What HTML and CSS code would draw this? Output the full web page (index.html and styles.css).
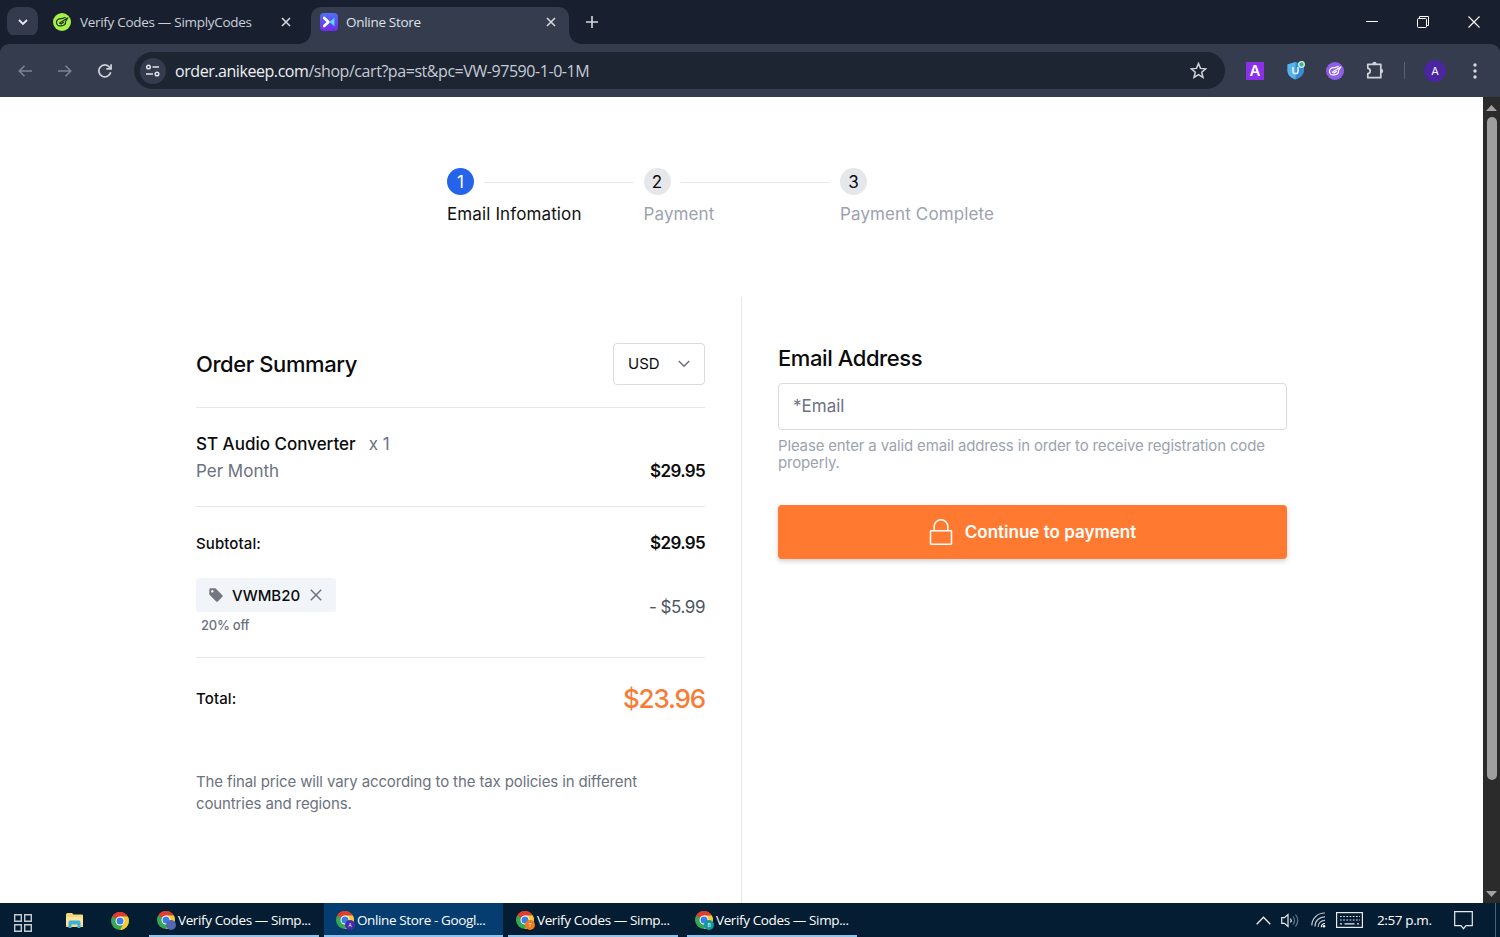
FILE: index.html
```
<!DOCTYPE html>
<html lang="en">
<head>
  <meta charset="UTF-8">
  <title>Online Store</title>
  <link rel="stylesheet" href="styles.css">
</head>
<body>

<!-- Shared icons -->
<svg class="defs" width="0" height="0">
  <symbol id="chrome" viewBox="0 0 18 18">
    <circle cx="9" cy="9" r="9" fill="#34a853"/>
    <path d="M9 9 L1.2 4.5 A9 9 0 0 1 16.8 4.5 L9 4.6z" fill="#e33b2e"/>
    <path d="M9 4.6 H16.8 A9 9 0 0 1 9 18 L12.9 11.2z" fill="#fcc934"/>
    <circle cx="9" cy="9" r="4.5" fill="#fff"/>
    <circle cx="9" cy="9" r="3.5" fill="#3c7de8"/>
  </symbol>
  <symbol id="close" viewBox="0 0 10 10">
    <path d="M1 1l8 8M9 1l-8 8" fill="none" stroke="currentColor" stroke-width="1.6"/>
  </symbol>
  <symbol id="tagmark" viewBox="0 0 18 18">
    <path d="M8.800 5.600C6 5.500 3.600 6.400 3.500 9.300C3.400 12.200 5.600 13.400 7.800 12.800C10.800 13 13 11.400 12.500 8.500L14.800 5L7.300 9.500L6.500 10.200L8.300 11L10.500 9.300M8.800 5.600L12.300 4.500" fill="none" stroke="currentColor" stroke-width="1.200" stroke-linejoin="round" stroke-linecap="round"/>
  </symbol>
</svg>

<div class="window">

  <!-- Tab strip -->
  <div class="tabs">
    <button class="tab-search">
      <svg width="10" height="7" viewBox="0 0 10 7"><path d="M1 1l4 4 4-4" fill="none" stroke="#e6e9ef" stroke-width="1.9"/></svg>
    </button>
    <div class="tab">
      <svg class="favicon lime" width="18" height="18"><use href="#tagmark"/></svg>
      <span class="tab-title">Verify Codes — SimplyCodes</span>
      <svg class="tab-close" width="10" height="10"><use href="#close"/></svg>
    </div>
    <div class="tab active">
      <svg class="favicon" width="18" height="18" viewBox="0 0 18 18">
        <defs><linearGradient id="store" x1="0" y1="0" x2="0" y2="1"><stop offset="0" stop-color="#4f70f5"/><stop offset="1" stop-color="#7429ea"/></linearGradient></defs>
        <rect width="18" height="18" rx="4" fill="url(#store)"/>
        <path d="M4.200 5l4.300 4-4.300 4" fill="none" stroke="#fff" stroke-width="2.600" stroke-linejoin="round" stroke-linecap="round"/>
        <path d="M9.500 9l5-4.200v8.400z" fill="#5bd9f5"/>
      </svg>
      <span class="tab-title">Online Store</span>
      <svg class="tab-close" width="10" height="10"><use href="#close"/></svg>
    </div>
    <svg class="new-tab" width="12" height="12" viewBox="0 0 12 12"><path d="M6 0v12M0 6h12" stroke="#d5d9e0" stroke-width="1.600"/></svg>
    <div class="controls">
      <svg width="12" height="12" viewBox="0 0 12 12"><path d="M0 5.500h12" stroke="#fff"/></svg>
      <svg width="12" height="12" viewBox="0 0 12 12" fill="none" stroke="#fff"><rect x=".5" y="2.500" width="9" height="9" rx="1"/><path d="M2.500 2.500v-2h9v9h-2"/></svg>
      <svg width="12" height="12" viewBox="0 0 12 12"><path d="M.5.5l11 11M11.500.5l-11 11" stroke="#fff" stroke-width="1.100"/></svg>
    </div>
  </div>

  <!-- Toolbar -->
  <div class="toolbar">
    <div class="nav">
      <svg width="14" height="12" viewBox="0 0 14 12" fill="none" stroke="#7c8493" stroke-width="1.600"><path d="M14 6H1.500M6.500.8L1.300 6l5.200 5.200"/></svg>
      <svg width="14" height="12" viewBox="0 0 14 12" fill="none" stroke="#7c8493" stroke-width="1.600"><path d="M0 6h12.500M7.500.8L12.700 6l-5.200 5.200"/></svg>
      <svg width="14" height="14" viewBox="0 0 14 14" fill="none" stroke="#cdd2da" stroke-width="1.700"><path d="M12.700 8.300A6 6 0 1 1 11.500 3.100L13 4.700M13.100.3v4.600H8.300"/></svg>
    </div>
    <div class="address">
      <span class="site-info">
        <svg width="14" height="13" viewBox="0 0 14 13" fill="none" stroke="#e2e5ea" stroke-width="1.500"><circle cx="2.500" cy="3" r="1.800"/><path d="M6.500 3H13M0 10h7"/><circle cx="11" cy="10" r="1.800"/></svg>
      </span>
      <span class="url"><b>order.anikeep.com</b>/shop/cart?pa=st&amp;pc=VW-97590-1-0-1M</span>
      <svg class="star" width="17" height="17" viewBox="0 0 17 17"><path d="M8.500 1.500l2 4.900 5.200.4-4 3.400 1.300 5.200-4.500-2.800L4 15.400l1.300-5.200-4-3.400 5.200-.4z" fill="none" stroke="#cfd3da" stroke-width="1.500"/></svg>
    </div>
    <div class="extensions">
      <span class="ext-a">A</span>
      <svg width="18" height="19" viewBox="0 0 18 19">
        <path d="M8.500 1L17 3.500v6c0 4.200-3.500 7.500-8.500 9C3.500 17 .5 13.700.5 9.500v-6z" fill="#378bd5"/>
        <path d="M8.500 1v17.500C3.500 17 .5 13.700.5 9.500v-6z" fill="#58b4e8"/>
        <path d="M6 6v4.200c0 3.300 5 3.300 5 0V6" fill="none" stroke="#d7f0ff" stroke-width="1.700"/>
        <circle cx="14.500" cy="3.500" r="2.800" fill="#35b788" stroke="#d9f2ee" stroke-width="1.300"/>
      </svg>
      <svg class="violet" width="18" height="18"><use href="#tagmark"/></svg>
      <svg width="19" height="19" viewBox="0 0 19 19"><path d="M1.800 3.300H14.800V16.700H1.800V12.700C5 12.400 5 7.600 1.800 7.300z" fill="none" stroke="#cfd3da" stroke-width="1.700" stroke-linejoin="round"/><path d="M6.300 3a2.200 2.200 0 0 1 4.400 0zM15 7.800a2.200 2.200 0 0 1 0 4.400z" fill="#cfd3da"/></svg>
      <i class="bar"></i>
      <span class="profile">A</span>
      <svg class="menu" width="4" height="16" viewBox="0 0 4 16" fill="#d5d9e0"><circle cx="2" cy="2" r="1.700"/><circle cx="2" cy="8" r="1.700"/><circle cx="2" cy="14" r="1.700"/></svg>
    </div>
  </div>

  <!-- Page -->
  <div class="viewport">
    <div class="page">
      <ol class="steps">
        <li class="step current">
          <div class="marker"><span class="number">1</span><hr></div>
          <div class="label">Email Infomation</div>
        </li>
        <li class="step">
          <div class="marker"><span class="number">2</span><hr></div>
          <div class="label">Payment</div>
        </li>
        <li class="step">
          <div class="marker"><span class="number">3</span></div>
          <div class="label">Payment Complete</div>
        </li>
      </ol>

      <div class="checkout">
        <section class="summary">
          <header class="summary-head">
            <h2>Order Summary</h2>
            <div class="currency">
              <span>USD</span>
              <svg width="12" height="8" viewBox="0 0 12 8"><path d="M.8 1L6 6.200 11.200 1" fill="none" stroke="#6b7280" stroke-width="1.600"/></svg>
            </div>
          </header>

          <div class="item">
            <div>
              <div class="item-name"><strong>ST Audio Converter</strong><span>x 1</span></div>
              <div class="period">Per Month</div>
            </div>
            <div class="price">$29.95</div>
          </div>

          <div class="subtotal">
            <div class="row"><span class="caption">Subtotal:</span><span class="price">$29.95</span></div>
            <div class="row discount">
              <div>
                <div class="coupon">
                  <svg width="14" height="14" viewBox="0 0 14 14"><path fill-rule="evenodd" d="M.3 1.500Q.3.300 1.500.3H6.500L13.400 7.200Q14.200 8 13.400 8.800L8.800 13.400Q8 14.200 7.200 13.400L.3 6.500zM3.300 2a1.300 1.300 0 1 0 .01 0z" fill="#737680"/></svg>
                  <span>VWMB20</span>
                  <svg class="remove" width="12" height="12" viewBox="0 0 12 12"><path d="M.8.8l10.400 10.400M11.200.8L.8 11.200" stroke="#6b7280" stroke-width="1.500"/></svg>
                </div>
                <div class="percent">20% off</div>
              </div>
              <span class="minus">- $5.99</span>
            </div>
          </div>

          <div class="row total"><span class="caption">Total:</span><span class="grand">$23.96</span></div>

          <p class="tax-note">The final price will vary according to the tax policies in different<br>countries and regions.</p>
        </section>

        <section class="email">
          <h2>Email Address</h2>
          <input type="email" placeholder="*Email">
          <p class="help">Please enter a valid email address in order to receive registration code<br>properly.</p>
          <button class="continue">
            <svg width="24" height="28" viewBox="0 0 24 28" fill="none" stroke="#fff" stroke-width="1.500"><rect x="1.500" y="12.700" width="21" height="13.500" rx=".6"/><path d="M5.200 12.700V8.500a6.800 6.800 0 0 1 13.600 0v4.200"/></svg>
            <span>Continue to payment</span>
          </button>
        </section>
      </div>
    </div>

    <div class="scrollbar">
      <svg width="11" height="6" viewBox="0 0 11 6"><path d="M0 6l5.500-6L11 6z" fill="#a2a2a2"/></svg>
      <div class="thumb"></div>
      <svg width="11" height="6" viewBox="0 0 11 6"><path d="M0 0l5.500 6L11 0z" fill="#a2a2a2"/></svg>
    </div>
  </div>

  <!-- Taskbar -->
  <div class="taskbar">
    <svg class="start" width="18" height="18" viewBox="0 0 18 18" fill="none" stroke="#c3cbd0" stroke-width="1.400"><path d="M.7.7h6.600v6.600H.7zM10.700.7h6.600v6.600h-6.600zM.7 10.700h6.600v6.600H.7zM10.700 10.700h6.600v6.600h-6.600z"/></svg>
    <svg class="explorer" width="17" height="15" viewBox="0 0 17 15"><path d="M0 1.500Q0 0 1.500 0H6l1.500 1.500H16Q17 1.500 17 2.500V14H0z" fill="#f6d775"/><path d="M0 4h17v8H0z" fill="#fbe69b"/><path d="M2.500 15V9q0-1.500 1.500-1.500h9q1.500 0 1.500 1.500v6h-3v-3.500h-6V15z" fill="#3db0df"/></svg>
    <svg class="launcher" width="18" height="18"><use href="#chrome"/></svg>
    <div class="task">
      <span class="app"><svg width="18" height="18"><use href="#chrome"/></svg><i class="badge b1"></i></span>
      <span class="task-title">Verify Codes — Simp...</span>
    </div>
    <div class="task focused">
      <span class="app"><svg width="18" height="18"><use href="#chrome"/></svg><i class="badge b2">A</i></span>
      <span class="task-title">Online Store - Googl...</span>
    </div>
    <div class="task">
      <span class="app"><svg width="18" height="18"><use href="#chrome"/></svg><i class="badge b3">T</i></span>
      <span class="task-title">Verify Codes — Simp...</span>
    </div>
    <div class="task">
      <span class="app"><svg width="18" height="18"><use href="#chrome"/></svg><i class="badge b4">B</i></span>
      <span class="task-title">Verify Codes — Simp...</span>
    </div>
    <div class="tray">
      <svg width="15" height="9" viewBox="0 0 15 9"><path d="M.7 8.300L7.500 1.200l6.800 7.100" fill="none" stroke="#e5ebef" stroke-width="1.300"/></svg>
      <svg class="sound" width="19" height="17" viewBox="0 0 19 17" fill="none" stroke="#e5ebef" stroke-width="1.200"><path d="M.7 5.700h2.800L7 2.500v12l-3.500-3.200H.7zM9.500 6.500q1.500 2 0 4"/><path d="M12 4.500q3 4 0 8M14.500 2.500q4.500 6 0 12" stroke="#66798a"/></svg>
      <svg class="wifi" width="15" height="16" viewBox="0 0 15 16" fill="none" stroke="#b9c4cc" stroke-width="1.200"><path d="M.8 13.500A12.700 12.700 0 0 1 14 1M4 14.500A9.500 9.500 0 0 1 14 4.800M7.200 15A6.500 6.500 0 0 1 14 8.300"/><path d="M10.300 15.200A3.800 3.800 0 0 1 14 11.500" stroke="#fff"/><circle cx="13" cy="14.300" r="1.300" fill="#fff" stroke="none"/></svg>
      <svg class="keyboard" width="27" height="16" viewBox="0 0 27 16" fill="none" stroke="#e5ebef" stroke-width="1.200"><rect x=".6" y=".6" width="25.800" height="14.800"/><path d="M4 4.500h20M4 8h20" stroke-dasharray="1.700 1.500"/><path d="M4 11.800h2M8.500 11.800h10M21 11.800h2"/></svg>
      <span class="clock">2:57 p.m.</span>
      <svg class="notify" width="19" height="19" viewBox="0 0 19 19"><path d="M.7.7h17.600v14H12l-2.500 3-2.500-3H.7z" fill="none" stroke="#e5ebef" stroke-width="1.200"/></svg>
      <i class="peek"></i>
    </div>
  </div>

</div>
</body>
</html>
```

FILE: styles.css
```
* {
  box-sizing: border-box;
}
body {
  margin: 0;
  font-family: Inter, sans-serif;
  color: #0b0b0d;
  overflow: hidden;
}
svg {
  display: block;
  flex: none;
}
.defs {
  position: absolute;
}
h2, p, ol {
  margin: 0;
  padding: 0;
}
.window {
  width: 1500px;
  height: 937px;
  display: flex;
  flex-direction: column;
  background: #fff;
}

/* Tab strip */
.tabs {
  height: 44px;
  flex: none;
  display: flex;
  background: #182030;
  font-family: "Open Sans", sans-serif;
  font-size: 13.5px;
  letter-spacing: -0.3px;
  color: #cbd0d9;
}
.tab-search {
  width: 31px;
  height: 30px;
  margin: 7px 4px 0 7px;
  padding: 0;
  border: 0;
  border-radius: 10px;
  background: #333b4c;
  display: grid;
  place-items: center;
}
.tab {
  width: 269px;
  display: flex;
  align-items: center;
  padding: 0 20px 0 11px;
}
.favicon {
  margin-right: 9px;
}
.lime {
  border-radius: 50%;
  background: #a6f04c;
  color: #1e3017;
}
.tab-title {
  flex: 1;
  white-space: nowrap;
}
.tab-close {
  color: #d5d9e0;
}
.tab.active {
  width: 258px;
  height: 37px;
  margin-top: 7px;
  padding: 0 13px 7px 9px;
  background: #343c4d;
  border-radius: 10px 10px 0 0;
  position: relative;
  color: #dfe3ea;
}
.tab.active .favicon {
  margin-right: 8px;
}
.tab.active::before,
.tab.active::after {
  content: "";
  position: absolute;
  bottom: 0;
  width: 12px;
  height: 12px;
}
.tab.active::before {
  left: -12px;
  background: radial-gradient(circle at 0 0, transparent 11.5px, #343c4d 12px);
}
.tab.active::after {
  right: -12px;
  background: radial-gradient(circle at 100% 0, transparent 11.5px, #343c4d 12px);
}
.new-tab {
  margin: 16px 0 0 17px;
}
.controls {
  margin-left: auto;
  display: flex;
  gap: 39px;
  padding: 16px 20px 0 0;
}

/* Toolbar */
.toolbar {
  height: 53px;
  flex: none;
  display: flex;
  align-items: center;
  background: #343c4d;
  border-radius: 9px 9px 0 0;
  box-shadow: 0 -9px 0 #182030;
  /* keeps the strip colour behind the rounded corners */
  outline: 9px solid transparent;
}
.nav {
  width: 134px;
  display: flex;
  align-items: center;
  gap: 26px;
  padding-left: 18px;
}
.address {
  width: 1091px;
  height: 37px;
  border-radius: 19px;
  background: #1d2533;
  display: flex;
  align-items: center;
  padding: 0 18px 0 6px;
}
.site-info {
  width: 26px;
  height: 26px;
  border-radius: 50%;
  background: #343c4d;
  display: grid;
  place-items: center;
}
.url {
  margin-left: 9px;
  flex: 1;
  font-family: "Open Sans", sans-serif;
  font-size: 16px;
  letter-spacing: -0.44px;
  color: #c6cbd3;
  white-space: nowrap;
}
.url b {
  font-weight: 400;
  color: #eef0f4;
}
.extensions {
  flex: 1;
  display: flex;
  align-items: center;
  padding-left: 21px;
}
.ext-a {
  width: 18px;
  height: 18px;
  margin-right: 23px;
  background: #8b2fe8;
  color: #fff;
  font-size: 15px;
  font-weight: 600;
  line-height: 18px;
  text-align: center;
}
.violet {
  margin: 0 22px 0 21px;
  border-radius: 50%;
  background: #8f5fe8;
  color: #fff;
}
.bar {
  width: 1px;
  height: 17px;
  margin: 0 19px;
  background: #596274;
}
.profile {
  width: 22px;
  height: 22px;
  border-radius: 50%;
  background: #4a25a0;
  color: #fff;
  font-size: 11px;
  line-height: 22px;
  text-align: center;
}
.menu {
  margin-left: 27px;
}

/* Page */
.viewport {
  height: 806px;
  flex: none;
  display: flex;
  overflow: hidden;
}
.page {
  width: 1483px;
  overflow: hidden;
}
.steps {
  display: flex;
  height: 200px;
  padding: 71px 0 0 447px;
  list-style: none;
}
.step {
  width: 196.5px;
}
.marker {
  display: flex;
  align-items: center;
}
.marker hr {
  flex: 1;
  margin: 1px 10px 0;
  border: 0;
  height: 1px;
  background: #e5e7eb;
}
.number {
  width: 27px;
  height: 27px;
  border-radius: 50%;
  background: #e5e7eb;
  font-size: 17px;
  line-height: 28px;
  text-align: center;
}
.current .number {
  background: #2563eb;
  color: #fff;
}
.label {
  margin-top: 7px;
  font-size: 17px;
  letter-spacing: 0.12px;
  line-height: 24px;
  color: #9ca3af;
  white-space: nowrap;
}
.current .label {
  color: #111;
}
.checkout {
  display: flex;
  height: 660px;
  padding-left: 196px;
}
h2 {
  font-size: 22px;
  font-weight: 500;
  letter-spacing: -0.42px;
  line-height: 30px;
}

/* Order summary */
.summary {
  width: 546px;
  padding: 46px 36px 0 0;
  border-right: 1px solid #e5e7eb;
}
.summary-head {
  display: flex;
  justify-content: space-between;
  align-items: center;
  height: 65px;
  padding-bottom: 23px;
  border-bottom: 1px solid #e5e7eb;
}
.currency {
  width: 92px;
  height: 42px;
  display: flex;
  align-items: center;
  justify-content: space-between;
  padding: 0 14px;
  border: 1px solid #d9dbe0;
  border-radius: 4px;
  font-size: 15px;
}
.item {
  display: flex;
  justify-content: space-between;
  align-items: flex-end;
  height: 99px;
  padding-bottom: 21px;
  border-bottom: 1px solid #e5e7eb;
  font-size: 17px;
  line-height: 27px;
}
.item-name {
  display: flex;
  gap: 13px;
}
.item-name strong {
  font-weight: 500;
}
.item-name span,
.period {
  color: #6b7280;
}
.price {
  font-size: 17px;
  font-weight: 600;
  letter-spacing: -0.65px;
}
.row {
  display: flex;
  justify-content: space-between;
  align-items: center;
}
.subtotal {
  height: 151px;
  padding-top: 26px;
  border-bottom: 1px solid #e5e7eb;
}
.caption {
  font-size: 15px;
  font-weight: 500;
  letter-spacing: 0.1px;
}
.discount {
  margin-top: 25px;
}
.coupon {
  width: 140px;
  height: 34px;
  display: flex;
  align-items: center;
  padding-left: 13px;
  border-radius: 3px;
  background: #f1f5f9;
  font-size: 15px;
  font-weight: 500;
}
.coupon span {
  width: 87px;
  padding-left: 9px;
}
.percent {
  padding: 4px 0 0 5px;
  font-size: 13px;
  font-weight: 500;
  letter-spacing: -0.25px;
  line-height: 19px;
  color: #6b7280;
}
.minus {
  font-size: 17px;
  letter-spacing: -0.45px;
  color: #4b5563;
}
.total {
  height: 80px;
}
.grand {
  font-size: 26px;
  font-weight: 500;
  letter-spacing: -1.15px;
  color: #f97b35;
}
.tax-note {
  margin-top: 33px;
  font-size: 15px;
  letter-spacing: -0.12px;
  line-height: 22px;
  color: #6b7280;
  white-space: nowrap;
}

/* Email form */
.email {
  width: 545px;
  padding: 46px 0 0 36px;
}
.email input {
  display: block;
  width: 509px;
  height: 47px;
  margin-top: 10px;
  padding: 0 14px 2px;
  border: 1px solid #d9dbe0;
  border-radius: 4px;
  font: 17px Inter, sans-serif;
}
.email input::placeholder {
  color: #6b7280;
}
.help {
  margin-top: 8px;
  font-size: 15px;
  letter-spacing: -0.16px;
  line-height: 16.5px;
  color: #9ca3af;
  white-space: nowrap;
}
.continue {
  display: flex;
  align-items: center;
  justify-content: center;
  gap: 12px;
  width: 509px;
  height: 54px;
  margin-top: 34px;
  border: 0;
  border-radius: 4px;
  background: #ff7a30;
  box-shadow: 0 2px 5px rgba(0, 0, 0, 0.2);
  color: #fff;
  font: 600 17px Inter, sans-serif;
}

/* Scrollbar */
.scrollbar {
  width: 17px;
  display: flex;
  flex-direction: column;
  align-items: center;
  justify-content: space-between;
  padding: 8px 0 6px;
  background: #2b2b2b;
}
.thumb {
  width: 10px;
  height: 663px;
  margin: 6px 0 auto;
  border-radius: 5px;
  background: #9f9f9f;
}

/* Taskbar */
.taskbar {
  height: 34px;
  flex: none;
  display: flex;
  background: #041d33;
  font-family: "Open Sans", sans-serif;
  font-size: 13.5px;
  letter-spacing: -0.38px;
  color: #fff;
}
.start {
  margin: 11px 0 0 14px;
}
.explorer {
  margin: 10px 0 0 34px;
}
.launcher {
  margin: 9px 20px 0 28px;
}
.task {
  width: 170px;
  margin-right: 9px;
  padding: 2px 0 0 8px;
  display: flex;
  align-items: center;
  border-bottom: 2px solid #8cc4ee;
}
.task.focused {
  width: 179px;
  margin: 0 5px 0 -4px;
  padding-left: 12px;
  background: #053d70;
}
.app {
  position: relative;
  margin-right: 3px;
}
.badge {
  position: absolute;
  right: -1px;
  bottom: -1px;
  width: 10px;
  height: 10px;
  border-radius: 50%;
  font-size: 5px;
  font-style: normal;
  line-height: 10px;
  text-align: center;
}
.b1 { background: #5467b0; }
.b2 { background: #4d2aa8; }
.b3 { background: #f27a1a; }
.b4 { background: #129aa0; }
.task-title {
  white-space: nowrap;
}
.tray {
  margin-left: auto;
  display: flex;
  align-items: center;
}
.sound { margin-left: 10px; }
.wifi { margin-left: 11px; }
.keyboard { margin-left: 10px; }
.clock {
  width: 54px;
  margin-left: 14px;
  white-space: nowrap;
}
.notify { margin-left: 23px; }
.peek {
  width: 1px;
  height: 34px;
  margin: 0 4px 0 22px;
  background: #4b6072;
}
```
